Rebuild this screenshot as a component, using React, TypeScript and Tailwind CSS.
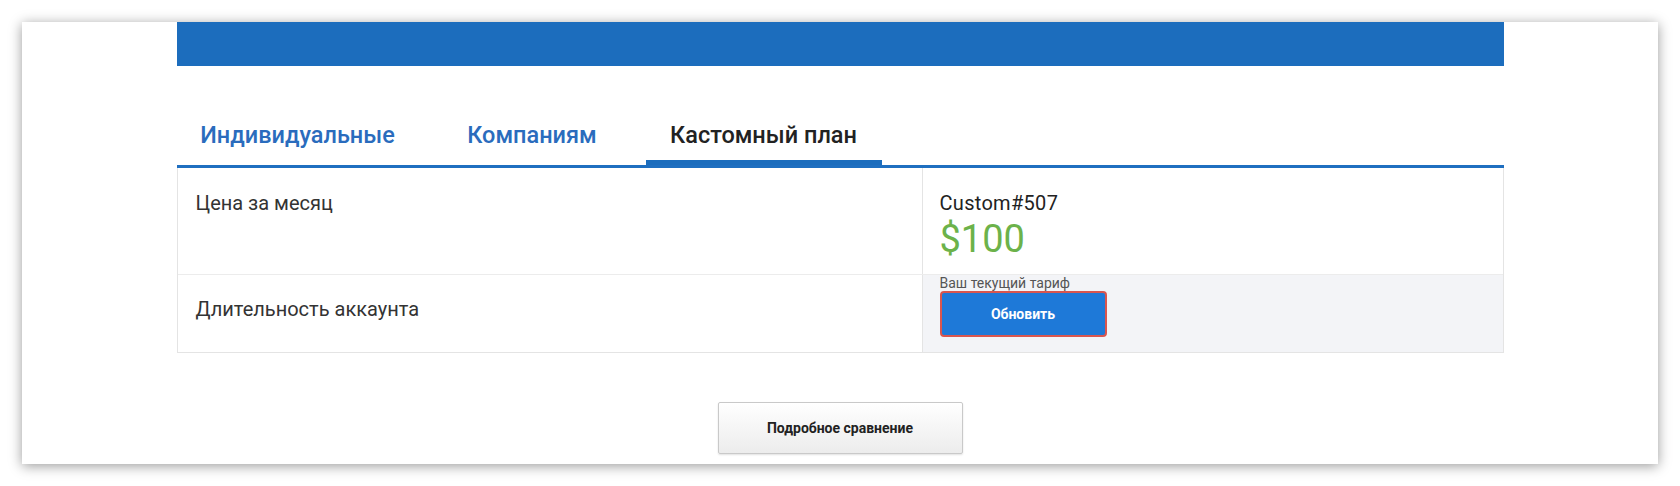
const TABS = [
  { label: "Индивидуальные", width: "w-[242px]", active: false },
  { label: "Компаниям", width: "w-[177px]", active: false },
  { label: "Кастомный план", width: "w-[236px]", active: true },
];

export default function App() {
  return (
    <div className="h-[486px] w-full bg-white p-[22px] font-['Roboto',_'Liberation_Sans',_sans-serif]">
      <div className="h-[442px] w-full overflow-hidden bg-white shadow-[0_2px_12px_rgba(0,0,0,0.4)]">
        <div className="mx-auto w-[1327px]">
          <div className="h-[44px] bg-[#1c6dbd]" />

          {/* tabs */}
          <div className="flex gap-[25px] pt-[54px]">
            {TABS.map((t) => (
              <div key={t.label} className={`flex flex-col items-center ${t.width}`}>
                <span
                  className={`pb-[10px] text-[23.5px] leading-[30px] font-medium ${
                    t.active ? "text-[#222]" : "text-[#2a6cbd]"
                  }`}
                >
                  {t.label}
                </span>
                <div className={`h-[5px] w-full ${t.active ? "bg-[#1c6dbd]" : "bg-transparent"}`} />
              </div>
            ))}
          </div>
          <div className="h-[3px] bg-[#1f6fc0]" />

          {/* comparison table */}
          <div className="border-x border-b border-[#e4e4e4]">
            <div className="flex h-[107px] border-b border-[#ececec]">
              <div className="w-[745px] border-r border-[#e4e4e4] pl-[18px] pt-[23px] text-[20px] leading-[24px] text-[#333]">
                Цена за месяц
              </div>
              <div className="flex-1 pl-[17px] pt-[23px]">
                <div className="text-[20px] leading-[24px] tracking-[0.3px] text-[#222]">Custom#507</div>
                <div className="mt-[4px] text-[38px] leading-[40px] text-[#6cb24a]">$100</div>
              </div>
            </div>
            <div className="flex h-[77px]">
              <div className="w-[745px] border-r border-[#e4e4e4] pl-[18px] pt-[22px] text-[20px] leading-[24px] text-[#333]">
                Длительность аккаунта
              </div>
              <div className="flex-1 bg-[#f3f4f7] pl-[17px]">
                <div className="text-[14px] leading-[16px] text-[#555]">Ваш текущий тариф</div>
                <button className="flex h-[46px] w-[167px] items-center justify-center rounded-[4px] border-2 border-[#d9564f] bg-[#1e79d8] text-[14px] font-bold text-white">
                  Обновить
                </button>
              </div>
            </div>
          </div>

          <div className="mt-[49px] flex justify-center">
            <button className="h-[52px] w-[245px] rounded-[2px] border border-[#c9c9c9] bg-gradient-to-b from-white to-[#ececec] text-[14px] font-bold text-[#222] shadow-[0_1px_2px_rgba(0,0,0,0.12)]">
              Подробное сравнение
            </button>
          </div>
        </div>
      </div>
    </div>
  );
}
